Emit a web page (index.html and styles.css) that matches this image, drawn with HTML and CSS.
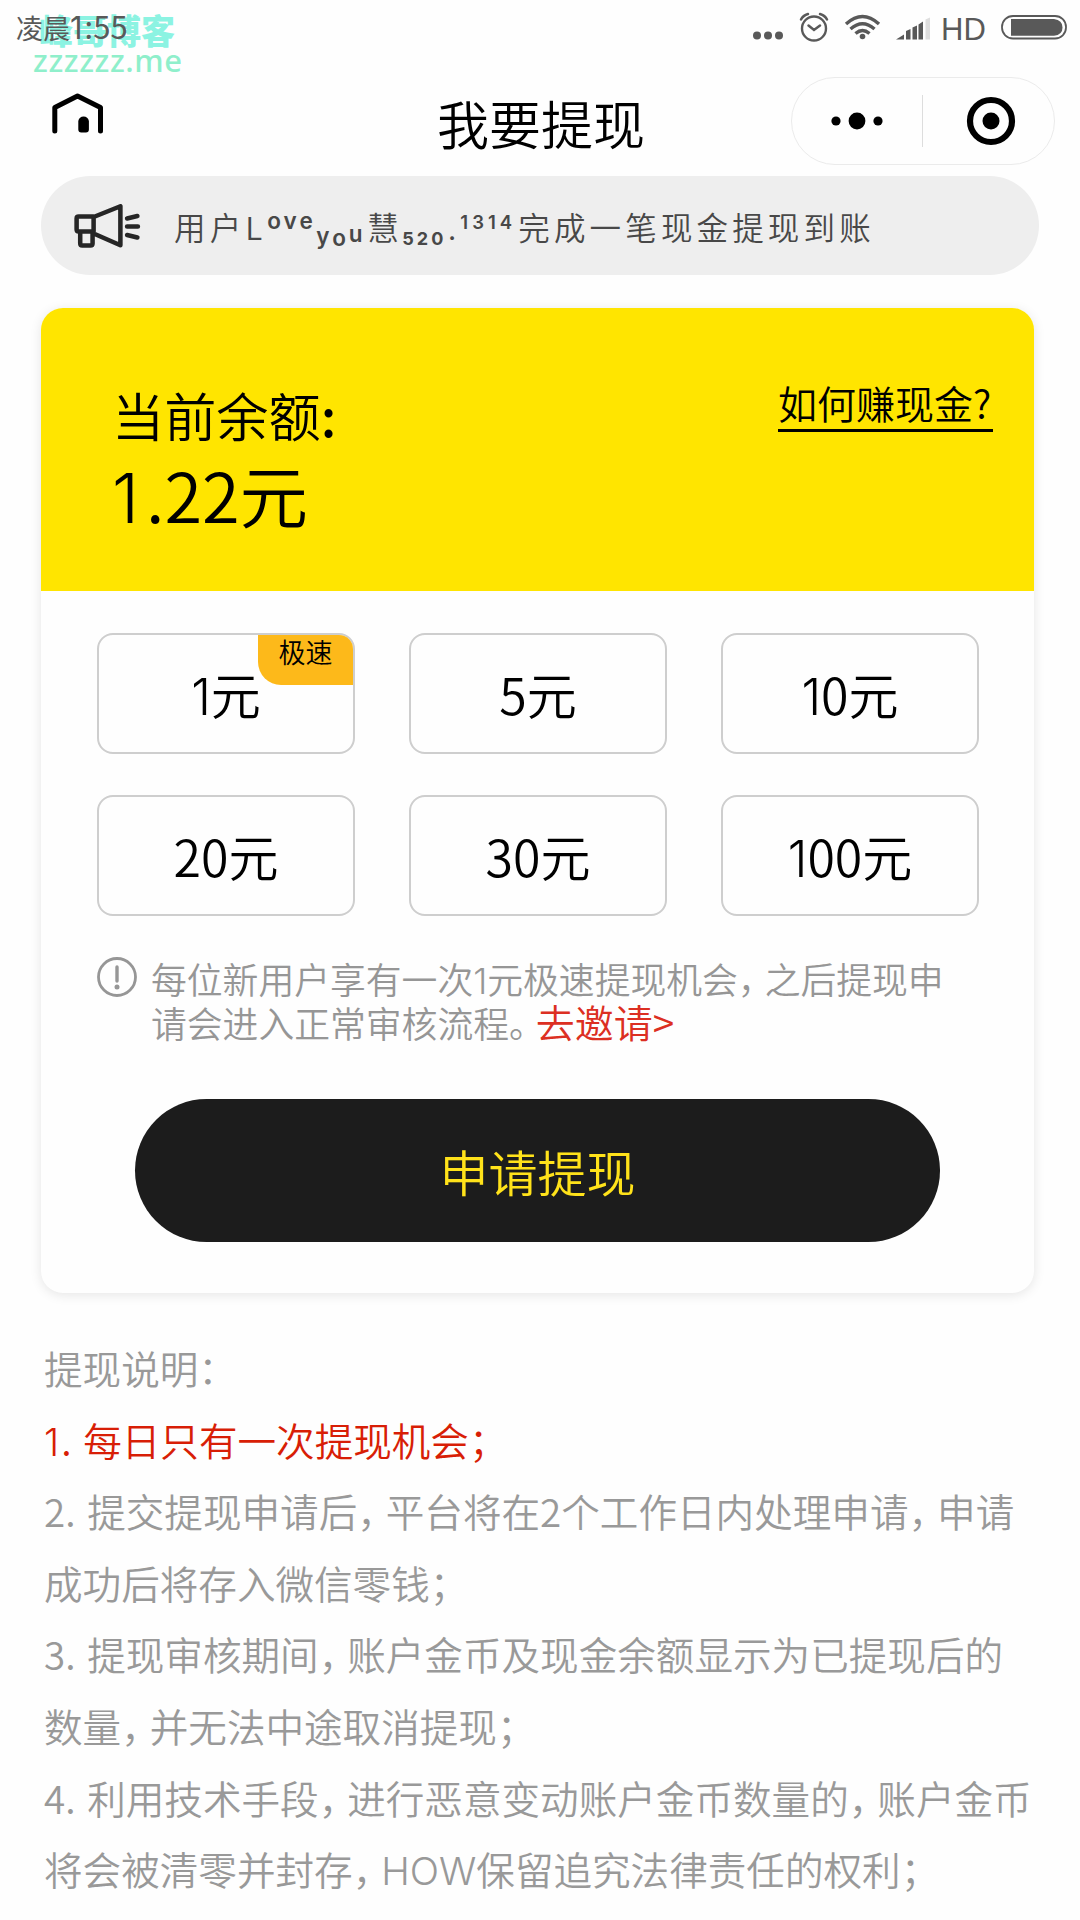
FILE: index.html
```html
<!DOCTYPE html>
<html lang="zh-CN">
<head>
<meta charset="UTF-8">
<title>我要提现</title>
<link rel="stylesheet" href="styles.css">
</head>
<body>
<div class="status-bar">
  <div class="clock">凌晨<span class="digits"><span class="num">1</span>:55</span></div>
  <div class="watermark"><span class="wm-name">峰哥博客</span><span class="wm-site">zzzzzz.me</span></div>
  <div class="status-right">
    <svg class="status-icons" width="184" height="34" viewBox="750 10 184 34" fill="none" stroke="#595959">
      <g fill="#595959" stroke="none"><circle cx="757" cy="35.5" r="4"/><circle cx="768" cy="35.5" r="4"/><circle cx="779" cy="35.5" r="4"/></g>
      <circle cx="814" cy="28.5" r="12" stroke-width="2.4"/>
      <path d="M808.5 25.5l5.5 4.5 6-4.5M801 19.5q2-4 7-5.5M827 19.5q-2-4-7-5.5" stroke-width="2.5" stroke-linecap="round"/>
      <path d="M846 24q16.500-15 33 0M850.5 29q12-10.500 24 0M855.5 33.500q7-6 14 0" stroke-width="3.4"/>
      <circle cx="862.5" cy="36.5" r="2.8" fill="#595959" stroke="none"/>
      <path d="M896 39.500l8-5v5zM906 31l4.500-2v10.500H906zM912.500 27.500l4.500-2v14h-4.500zM918.500 24.500l4.500-3v18h-4.500z" fill="#595959" stroke="none"/>
      <path d="M925.500 19.500l4.500-2v22h-4.500z" fill="#dedede" stroke="none"/>
    </svg>
    <span class="hd">HD</span>
    <svg class="battery" width="68" height="26" viewBox="0 0 68 26"><rect x="2" y="2" width="64" height="22.5" rx="11" fill="none" stroke="#595959" stroke-width="1.8"/><path d="M11 5h43q8.500 1 8.500 8.500t-8.500 8.200H11z" fill="#595959"/></svg>
  </div>
</div>

<header class="nav">
  <svg class="home" width="52" height="42" viewBox="52 92 52 42"><path d="M54.800 131v-23.500L77.500 96l23 11.500V131" fill="none" stroke="#000" stroke-width="5" stroke-linecap="round" stroke-linejoin="round"/><path d="M78.300 129.500V121q1-4.500 5.300-4.500t5.300 4.500v8.500q0 3-3 3h-4.600q-3 0-3-3z"/></svg>
  <h1 class="title">我要提现</h1>
  <div class="capsule">
    <svg class="more" width="52" height="18" viewBox="0 0 52 18"><circle cx="5" cy="9" r="4.600"/><circle cx="26" cy="9" r="8.400"/><circle cx="47" cy="9" r="4.600"/></svg>
    <i class="divider"></i>
    <svg class="close" width="50" height="50" viewBox="0 0 50 50"><circle cx="25" cy="25" r="21" fill="none" stroke="#000" stroke-width="6.200"/><circle cx="25" cy="25" r="8.500"/></svg>
  </div>
</header>

<div class="notice">
  <svg class="horn" width="68" height="44" viewBox="0 0 66 44" preserveAspectRatio="none" fill="none" stroke="#262626" stroke-width="4.4" stroke-linejoin="round" stroke-linecap="round"><path d="M3.500 14.500q0-2 2-2H20v15H5.500q-2 0-2-2zM7 28v11.500q0 2 2 2h8q2 0 2-2V28M20 13L46 2.200v39L20 29.500"/><path d="M52.500 14.500l10-2.500M52.500 22.500h10.500M52.500 31l10 2.500"/></svg>
  <p class="notice-text"><span>用户</span><span class="big-l">L</span><span class="ove">ove</span><span class="you"><i>y</i><i class="low">o</i><i class="high">u</i></span><span class="hui">慧</span><span class="n520">520</span><span class="dot">.</span><span class="n1314">1314</span><span>完成一笔现金提现到账</span></p>
</div>

<main class="card">
  <section class="balance">
    <div>
      <div class="balance-label">当前余额<span class="colon">:</span></div>
      <div class="balance-value"><span class="num">1</span>.22元</div>
    </div>
    <a class="how">如何赚现金?</a>
  </section>
  <div class="amounts">
    <div class="amount"><span class="num">1</span>元<span class="tag">极速</span></div>
    <div class="amount">5元</div>
    <div class="amount"><span class="num">1</span>0元</div>
    <div class="amount">20元</div>
    <div class="amount">30元</div>
    <div class="amount"><span class="num">1</span>00元</div>
  </div>
  <div class="tip">
    <svg class="info" width="42" height="42" viewBox="0 0 42 42"><circle cx="21" cy="21" r="18.500" fill="none" stroke="#969696" stroke-width="2.800"/><path d="M21 11v14" stroke="#969696" stroke-width="3.400" stroke-linecap="round"/><circle cx="21" cy="31" r="2.500" fill="#969696"/></svg>
    <p>每位新用户享有一次<span class="num">1</span>元极速提现机会<span class="pc">，</span>之后提现申<br>请会进入正常审核流程<span class="pc">。</span><a class="invite">去邀请&gt;</a></p>
  </div>
  <div class="submit">申请提现</div>
</main>

<section class="rules">
  <p>提现说明：</p>
  <p class="red"><span class="num">1</span>. 每日只有一次提现机会；</p>
  <p>2. 提交提现申请后<span class="pc">，</span>平台将在2个工作日内处理申请<span class="pc">，</span>申请</p>
  <p>成功后将存入微信零钱；</p>
  <p>3. 提现审核期间<span class="pc">，</span>账户金币及现金余额显示为已提现后的</p>
  <p>数量<span class="pc">，</span>并无法中途取消提现；</p>
  <p>4. 利用技术手段<span class="pc">，</span>进行恶意变动账户金币数量的<span class="pc">，</span>账户金币</p>
  <p>将会被清零并封存<span class="pc">，</span><span class="latin">HOW</span>保留追究法律责任的权利；</p>
</section>
</body>
</html>
```
FILE: styles.css
```css
* { box-sizing: border-box; margin: 0; padding: 0; }
i { font-style: normal; }
body {
  width: 1080px;
  height: 1920px;
  overflow: hidden;
  background: #fefefe;
  color: #000;
  font-family: "Noto Sans CJK SC", sans-serif;
  font-weight: 350;
  white-space: nowrap;
}
.num { font-family: Inter, sans-serif; font-weight: 300; line-height: 1; }

.status-bar {
  position: relative;
  display: flex;
  justify-content: space-between;
  height: 77px;
  padding: 0 12px 0 16px;
}
.clock { position: relative; z-index: 1; font-size: 27px; line-height: 56px; color: #595959; font-weight: 400; }
.digits { font-size: 31px; line-height: 1; }
.digits .num { font-weight: 400; letter-spacing: 2px; }
.watermark { position: absolute; left: 33px; top: 12px; display: flex; flex-direction: column; }
.wm-name { padding-left: 6px; font-size: 34px; line-height: 36px; font-weight: 900; color: #8cf3e2; }
.wm-site { font-family: "Noto Sans", sans-serif; font-size: 31px; line-height: 24px; letter-spacing: .6px; font-weight: 500; color: #8fefcb; }
.status-right { display: flex; padding-top: 10px; }
.hd { width: 46px; margin-left: 7px; font-family: "Liberation Sans", sans-serif; font-size: 31px; line-height: 39px; font-weight: 400; color: #595959; }
.battery { margin: 4px 0 0 13px; }

.nav { display: flex; height: 99px; padding: 0 25px 0 52px; }
.home { margin-top: 15px; }
.title { margin-left: 333px; font-size: 52px; line-height: 92px; font-weight: 350; }
.capsule {
  display: flex;
  align-items: center;
  width: 264px;
  height: 88px;
  margin-left: auto;
  padding: 0 0 0 39px;
  border: 1px solid #ebebeb;
  border-radius: 44px;
}
.divider { width: 1px; height: 52px; margin: 0 43px 0 39px; background: #ddd; }
.more, .close { flex: none; }

.notice {
  display: flex;
  align-items: center;
  width: 998px;
  height: 99px;
  margin-left: 41px;
  padding-left: 32px;
  background: #eee;
  border-radius: 50px;
}
.notice-text {
  display: flex;
  align-items: baseline;
  margin-left: 33px;
  padding-top: 8px;
  font-size: 31.500px;
  line-height: 91px;
  letter-spacing: 4.150px;
  color: #484848;
}
.big-l { width: 22px; }
.ove, .you, .n520, .n1314, .dot { font-family: Inter, sans-serif; font-weight: 600; letter-spacing: 3px; }
.ove { width: 49px; font-size: 22.500px; position: relative; top: -11px; }
.you { width: 51px; font-size: 22.500px; position: relative; top: 4px; }
.you .low { position: relative; top: 2px; }
.you .high { position: relative; top: -2px; }
.hui { width: 35px; }
.n520 { width: 46px; font-size: 18px; position: relative; top: 5px; font-weight: 700; }
.dot { width: 12px; font-size: 24px; }
.n1314 { width: 58px; font-size: 18.500px; letter-spacing: 4px; position: relative; top: -11px; }

.card {
  width: 993px;
  height: 985px;
  margin: 33px 0 0 41px;
  background: #fefefe;
  border-radius: 22px;
  box-shadow: 0 2px 12px rgba(0, 0, 0, .1);
}
.balance {
  display: flex;
  justify-content: space-between;
  height: 283px;
  padding: 71px 41px 0 71px;
  background: #ffe500;
  border-radius: 22px 22px 0 0;
}
.balance-label { font-size: 52.200px; line-height: 70px; }
.colon { font-weight: 500; }
.balance-value { font-size: 68.500px; line-height: 90px; }
.balance-value .num { letter-spacing: 7px; }
.how { width: 215px; height: 53px; font-size: 39px; line-height: 46px; border-bottom: 3px solid #000; }
.amounts {
  display: grid;
  grid-template-columns: repeat(3, 258px);
  column-gap: 54px;
  row-gap: 41px;
  padding: 42px 55px 0 56px;
}
.amount {
  position: relative;
  height: 121px;
  border: 2px solid #cecece;
  border-radius: 16px;
  overflow: hidden;
  text-align: center;
  font-size: 50px;
  line-height: 117px;
}
.tag {
  position: absolute;
  top: 0;
  right: 0;
  width: 95px;
  height: 50px;
  background: #fdb91a;
  border-radius: 0 0 0 23px;
  font-size: 27px;
  line-height: 34px;
}
.tip { display: flex; margin: 40px 0 0 55px; color: #969696; font-size: 35.800px; line-height: 44px; }
.info { flex: none; margin-right: 13px; }
.tip p { height: 88px; }
.tip .pc { letter-spacing: -9px; }
.pc { letter-spacing: -10px; }
.invite { font-size: 39px; line-height: 1; color: #dc2f22; }
.submit {
  width: 805px;
  height: 143px;
  margin: 55px 0 0 94px;
  border-radius: 72px;
  background: #1c1c1c;
  color: #ffe21a;
  text-align: center;
  font-size: 49px;
  line-height: 143px;
}

.rules { padding: 39px 0 0 44px; font-size: 38.600px; line-height: 71.600px; color: #999; word-spacing: 3px; }
.rules .red { color: #d81e06; }
.rules .num { letter-spacing: 2px; }
.latin { font-family: Inter, sans-serif; font-weight: 300; line-height: 1; }
```
